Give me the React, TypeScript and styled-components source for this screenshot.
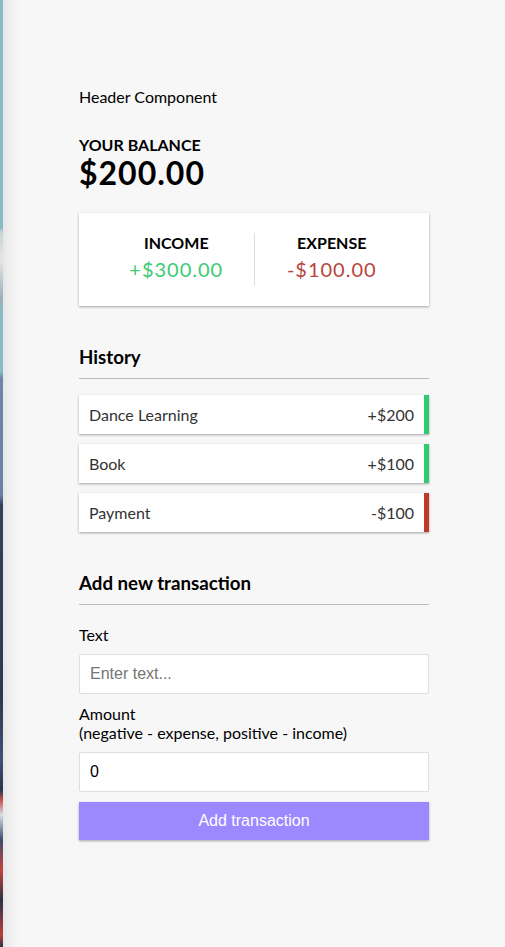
import React from "react";
import styled, { createGlobalStyle } from "styled-components";

const GlobalStyle = createGlobalStyle`
  * { box-sizing: border-box; }
  html, body { margin: 0; padding: 0; }
  body {
    background: #f7f7f7;
    font-family: "Lato", "Noto Sans", sans-serif;
    color: #000;
  }
`;

const shadow = "0 1px 3px rgba(0, 0, 0, 0.12), 0 1px 2px rgba(0, 0, 0, 0.24)";

const Screen = styled.div`
  display: flex;
  min-height: 947px;
`;

const DesktopEdge = styled.div`
  width: 3px;
  flex: none;
  background: linear-gradient(
    to bottom,
    #87bcc6 0px,
    #87bcc6 228px,
    #c9d3d6 232px,
    #e3e6e8 260px,
    #9aaeb6 300px,
    #87bcc6 310px,
    #87bcc6 372px,
    #6f86aa 378px,
    #6a80a4 495px,
    #35415c 505px,
    #2e3a55 700px,
    #3e5272 760px,
    #2b3550 790px,
    #c0524a 800px,
    #d9dde3 815px,
    #3a4c6e 840px,
    #c4423c 870px,
    #2a3148 900px,
    #b8403a 935px,
    #2a3148 947px
  );
`;

const Main = styled.main`
  flex: 1;
  display: flex;
  justify-content: center;
  background: linear-gradient(to right, #e6e6e6 0px, #f1f1f1 8px, #f7f7f7 18px);
`;

const Container = styled.div`
  width: 350px;
  padding-top: 87px;
`;

const HeaderText = styled.div`
  font-size: 16px;
  line-height: 19.2px;
  margin-bottom: 29px;
`;

const Caption = styled.h4`
  margin: 0;
  font-size: 16px;
  font-weight: 700;
  line-height: 19.2px;
  text-transform: uppercase;
`;

const Balance = styled.h1`
  margin: 0;
  font-size: 32px;
  font-weight: 700;
  line-height: 38.4px;
  letter-spacing: 1px;
`;

const IncExpCard = styled.div`
  background: #fff;
  box-shadow: ${shadow};
  padding: 20px;
  display: flex;
  justify-content: space-between;
  margin: 20px 0;
`;

const IncExpCol = styled.div<{ $divider?: boolean }>`
  flex: 1;
  text-align: center;
  ${(p) => (p.$divider ? "border-right: 1px solid #dedede;" : "")}
`;

const Money = styled.p<{ $kind: "plus" | "minus" }>`
  font-size: 20px;
  line-height: 24px;
  letter-spacing: 1px;
  margin: 5px 0;
  color: ${(p) => (p.$kind === "plus" ? "#3ccb74" : "#b8453c")};
`;

const SectionTitle = styled.h3`
  font-size: 18.72px;
  font-weight: 700;
  line-height: 22px;
  border-bottom: 1px solid #bbb;
  padding-bottom: 10px;
  margin: 40px 0 10px;
`;

const List = styled.ul`
  list-style: none;
  padding: 0;
  margin: 16px 0 39px;
`;

const Item = styled.li<{ $kind: "plus" | "minus" }>`
  background: #fff;
  box-shadow: ${shadow};
  color: #333;
  display: flex;
  justify-content: space-between;
  position: relative;
  padding: 10px;
  margin: 10px 0;
  font-size: 16px;
  line-height: 19px;
  border-right: 5px solid ${(p) => (p.$kind === "plus" ? "#2ecc71" : "#c0392b")};
`;

const FormControl = styled.div``;

const Label = styled.label`
  display: inline-block;
  margin: 10px 0;
  font-size: 16px;
  line-height: 19px;
`;

const Input = styled.input`
  border: 1px solid #dedede;
  border-radius: 2px;
  display: block;
  font-family: "Liberation Sans", Arial, sans-serif;
  font-size: 16px;
  line-height: normal;
  padding: 10px;
  width: 100%;
  color: #000;
  background: #fff;
  outline: none;
  &::placeholder {
    color: #757575;
  }
`;

const Button = styled.button`
  cursor: pointer;
  background: #9c88ff;
  box-shadow: ${shadow};
  color: #fff;
  border: 0;
  display: block;
  font-family: "Liberation Sans", Arial, sans-serif;
  font-size: 16px;
  line-height: normal;
  margin: 10px 0 30px;
  padding: 10px;
  width: 100%;
`;

const transactions: { id: number; text: string; amount: number }[] = [
  { id: 1, text: "Dance Learning", amount: 200 },
  { id: 2, text: "Book", amount: 100 },
  { id: 3, text: "Payment", amount: -100 },
];

export default function App() {
  return (
    <>
      <GlobalStyle />
      <Screen>
        <DesktopEdge />
        <Main>
          <Container>
            <HeaderText>Header Component</HeaderText>
            <Caption>Your Balance</Caption>
            <Balance>$200.00</Balance>
            <IncExpCard>
              <IncExpCol $divider>
                <Caption>Income</Caption>
                <Money $kind="plus">+$300.00</Money>
              </IncExpCol>
              <IncExpCol>
                <Caption>Expense</Caption>
                <Money $kind="minus">-$100.00</Money>
              </IncExpCol>
            </IncExpCard>
            <SectionTitle>History</SectionTitle>
            <List>
              {transactions.map((t) => (
                <Item key={t.id} $kind={t.amount < 0 ? "minus" : "plus"}>
                  {t.text}
                  <span>
                    {t.amount < 0 ? "-" : "+"}${Math.abs(t.amount)}
                  </span>
                </Item>
              ))}
            </List>
            <SectionTitle>Add new transaction</SectionTitle>
            <form onSubmit={(e) => e.preventDefault()}>
              <FormControl>
                <Label htmlFor="text">Text</Label>
                <Input type="text" id="text" placeholder="Enter text..." />
              </FormControl>
              <FormControl>
                <Label htmlFor="amount">
                  Amount <br />
                  (negative - expense, positive - income)
                </Label>
                <Input type="number" id="amount" defaultValue={0} placeholder="Enter amount..." />
              </FormControl>
              <Button type="submit">Add transaction</Button>
            </form>
          </Container>
        </Main>
      </Screen>
    </>
  );
}
